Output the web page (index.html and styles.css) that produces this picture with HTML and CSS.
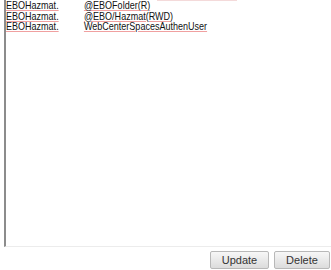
FILE: index.html
```html
<!DOCTYPE html>
<html lang="en">
<head>
  <meta charset="UTF-8">
  <title>Permissions</title>
  <link rel="stylesheet" href="styles.css">
</head>
<body>
  <div class="panel">
    <div class="list">
      <div class="row cut"><span class="c1"></span><span class="c2">&nbsp;</span></div>
      <div class="row"><span class="c1 sp">EBOHazmat.</span><span class="c2 sp">@EBOFolder(R)</span></div>
      <div class="row"><span class="c1 sp">EBOHazmat.</span><span class="c2 sp">@EBO/Hazmat(RWD)</span></div>
      <div class="row"><span class="c1 sp">EBOHazmat.</span><span class="c2 sp">WebCenterSpacesAuthenUser</span></div>
    </div>
    <div class="actions">
      <button class="btn">Update</button>
      <button class="btn">Delete</button>
    </div>
  </div>
</body>
</html>
```

FILE: styles.css
```css
body, html {
  margin: 0;
  padding: 0;
  background: #fff;
}
.panel {
  width: 331px;
  height: 270px;
  display: flex;
  flex-direction: column;
}
.list {
  margin-left: 4px;
  height: 247px;
  box-sizing: border-box;
  border-left: 2px solid #8c8c8c;
  border-bottom: 1px solid #ececec;
  font-family: "Liberation Sans", Arial, sans-serif;
  font-size: 11px;
  line-height: 10.5px;
  color: #111;
}
/* the list font is a narrow face; squeeze the regular one */
.row {
  display: flex;
  height: 10.5px;
  transform: scaleX(0.82);
  transform-origin: left;
}
.row.cut {
  height: 0;
  transform: none;
}
.row.cut .c2 {
  display: block;
  width: 80px;
  margin-left: 56px;
  height: 0;
  border-top: 1px solid #f4dada;
}
.c1 {
  width: 95px;
  flex: none;
}
.sp {
  text-decoration: underline solid #f0a0a0;
  text-decoration-thickness: 1px;
  text-underline-offset: 1px;
}
.actions {
  display: flex;
  justify-content: flex-end;
  gap: 5px;
  padding: 4px 1px 0 0;
}
.btn {
  width: 59px;
  height: 18px;
  font-family: "Liberation Sans", Arial, sans-serif;
  font-size: 11px;
  color: #333;
  border: 1px solid #b8b8b8;
  border-radius: 2px;
  background: linear-gradient(#f7f7f7, #dcdcdc);
  padding: 0;
}
.btn + .btn {
  width: 56px;
}
```
